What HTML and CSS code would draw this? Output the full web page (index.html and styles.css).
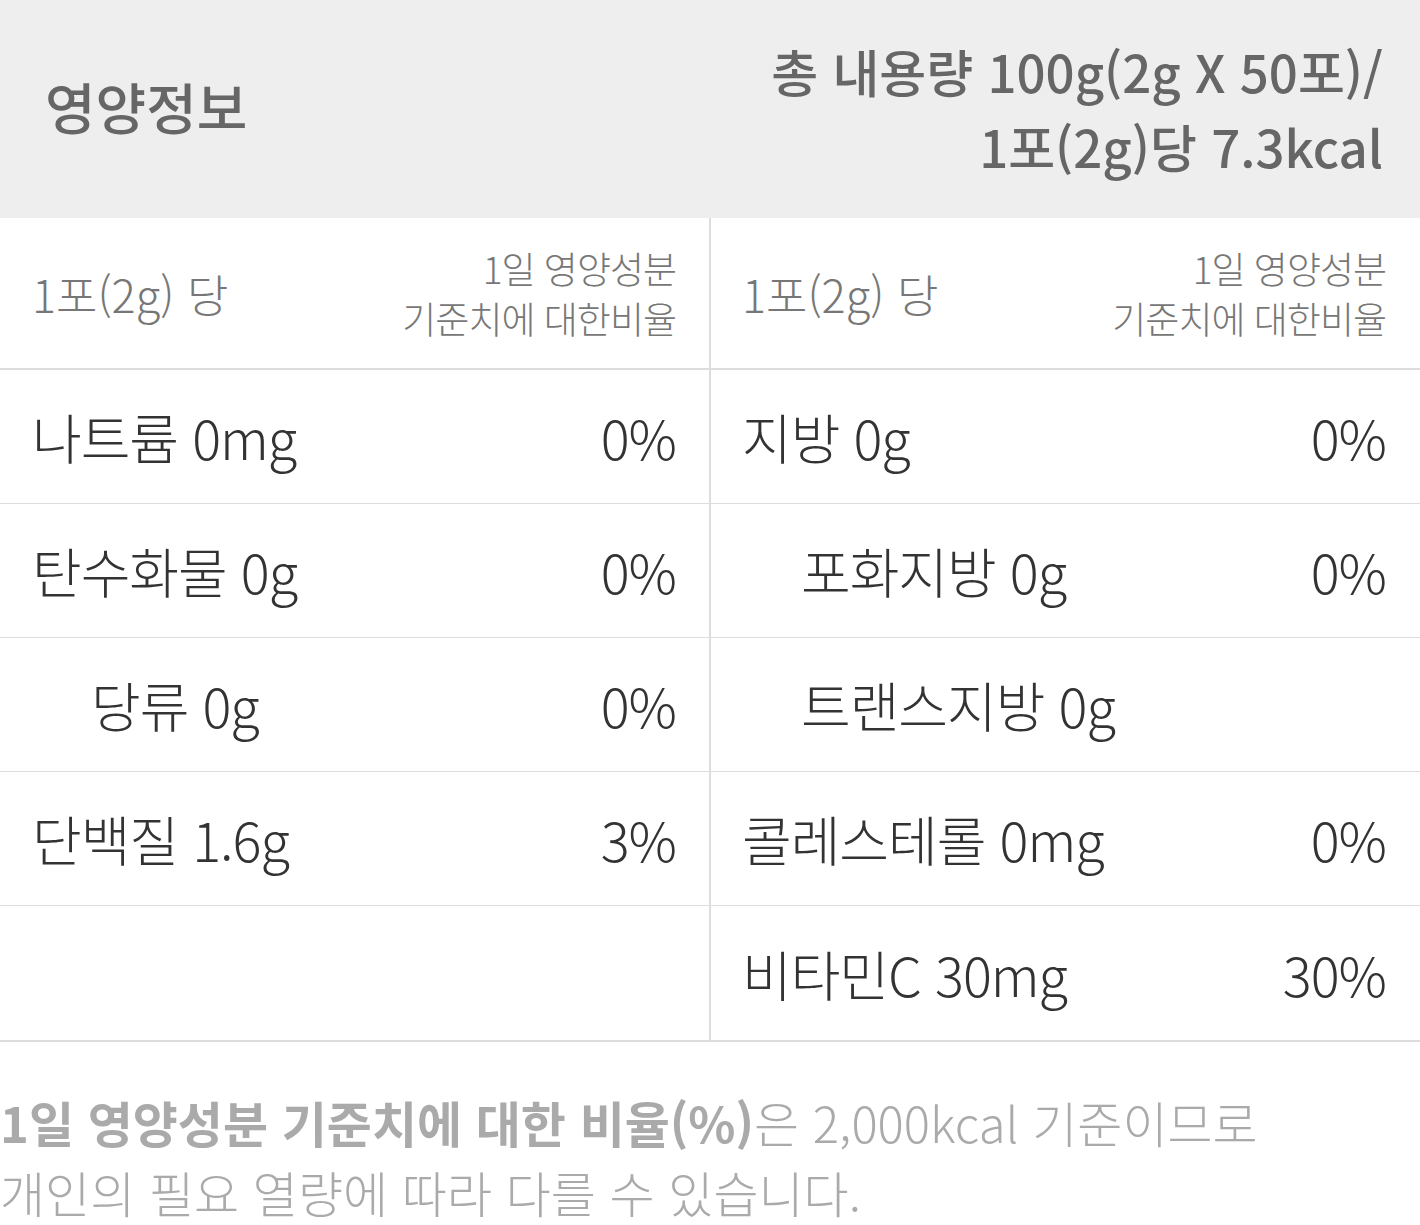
FILE: index.html
```html
<!DOCTYPE html>
<html lang="ko">
<head>
<meta charset="utf-8">
<title>영양정보</title>
<link rel="stylesheet" href="styles.css">
</head>
<body>
<div class="page">
  <header class="head">
    <h1 class="title">영양정보</h1>
    <p class="total">총 내용량 100g(2g X 50포)/<br>1포(2g)당 7.3kcal</p>
  </header>
  <div class="table">
    <div class="row row-head">
      <div class="cell"><span class="th-left">1포(2g) 당</span><span class="th-right">1일 영양성분<br>기준치에 대한비율</span></div>
      <div class="cell"><span class="th-left">1포(2g) 당</span><span class="th-right">1일 영양성분<br>기준치에 대한비율</span></div>
    </div>
    <div class="row">
      <div class="cell"><span class="name">나트륨 0mg</span><span class="val">0%</span></div>
      <div class="cell"><span class="name">지방 0g</span><span class="val">0%</span></div>
    </div>
    <div class="row">
      <div class="cell"><span class="name">탄수화물 0g</span><span class="val">0%</span></div>
      <div class="cell"><span class="name sub">포화지방 0g</span><span class="val">0%</span></div>
    </div>
    <div class="row">
      <div class="cell"><span class="name sub">당류 0g</span><span class="val">0%</span></div>
      <div class="cell"><span class="name sub">트랜스지방 0g</span><span class="val"></span></div>
    </div>
    <div class="row">
      <div class="cell"><span class="name">단백질 1.6g</span><span class="val">3%</span></div>
      <div class="cell"><span class="name">콜레스테롤 0mg</span><span class="val">0%</span></div>
    </div>
    <div class="row row-last">
      <div class="cell"></div>
      <div class="cell"><span class="name">비타민C 30mg</span><span class="val">30%</span></div>
    </div>
  </div>
  <p class="note"><b>1일 영양성분 기준치에 대한 비율(%)</b>은 2,000kcal 기준이므로<br>개인의 필요 열량에 따라 다를 수 있습니다.</p>
</div>
</body>
</html>
```
FILE: styles.css
```css
html, body {
  margin: 0;
  padding: 0;
  background: #fff;
}
.page {
  width: 1420px;
  font-family: "Noto Sans CJK KR", "Noto Sans", sans-serif;
}
.head {
  height: 218px;
  background: #eeeeee;
  display: flex;
  justify-content: space-between;
  align-items: center;
  padding: 0 37px 0 45px;
  box-sizing: border-box;
}
.title {
  margin: 0;
  font-size: 55px;
  font-weight: 500;
  color: #666;
  letter-spacing: 0;
  position: relative;
  top: -4px;
}
.total {
  margin: 0;
  text-align: right;
  font-size: 51px;
  line-height: 75px;
  font-weight: 500;
  color: #666;
  letter-spacing: 0;
}
.table {
  display: flex;
  flex-direction: column;
}
.row {
  display: grid;
  grid-template-columns: 711px 709px;
  height: 134px;
  border-bottom: 1px solid #dddddd;
  box-sizing: border-box;
}
.row-head {
  height: 152px;
  border-bottom: 2px solid #dddddd;
}
.row-last {
  height: 136px;
  border-bottom: 2px solid #dddddd;
}
.cell {
  display: flex;
  align-items: center;
  justify-content: space-between;
  padding: 0 33px 0 32px;
  box-sizing: border-box;
}
.cell:first-child {
  border-right: 2px solid #dddddd;
}
.cell:last-child {
  padding: 0 34px 0 31px;
}
.th-left {
  font-size: 45px;
  font-weight: 300;
  color: #777;
  letter-spacing: 0;
}
.th-right {
  text-align: right;
  font-size: 37px;
  line-height: 50px;
  font-weight: 300;
  color: #777;
  letter-spacing: -1px;
}
.name, .val {
  font-size: 54px;
  font-weight: 300;
  color: #333;
  letter-spacing: -1px;
}
.name.sub {
  padding-left: 59px;
}
.note {
  margin: 45px 0 0;
  font-size: 49px;
  line-height: 70px;
  font-weight: 300;
  color: #aaa;
  letter-spacing: 0;
}
.note b {
  font-weight: 700;
}
```
